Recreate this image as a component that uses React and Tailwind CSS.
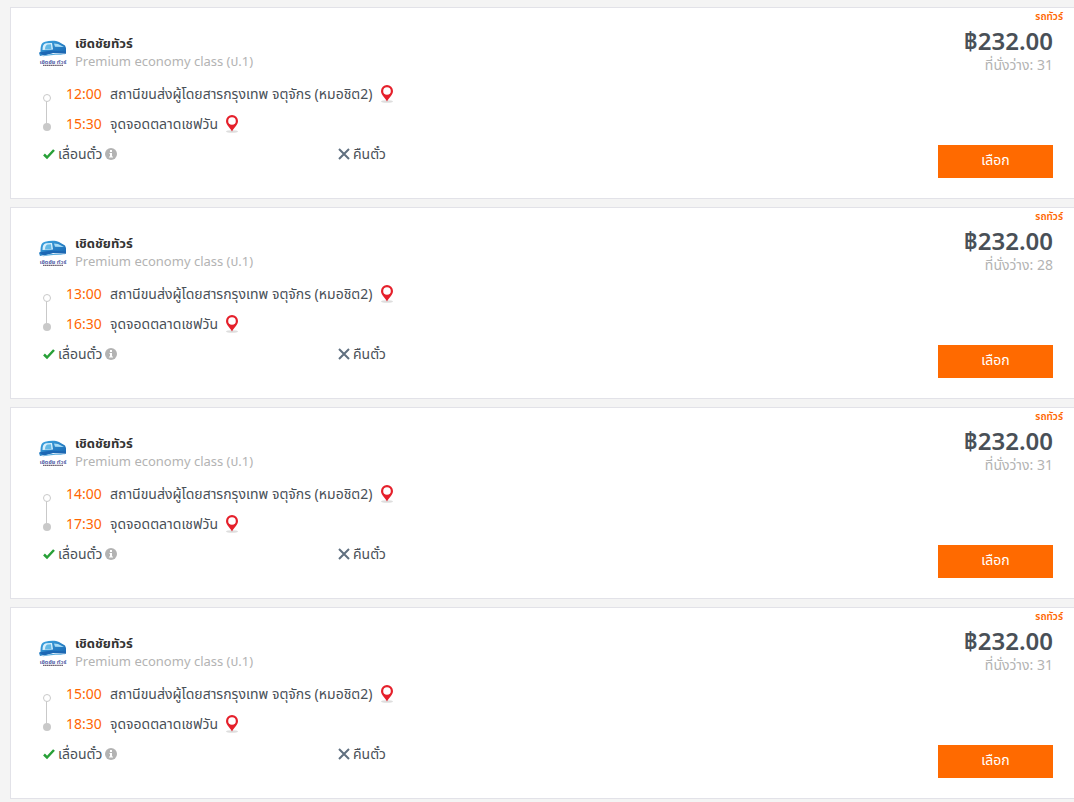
import React from "react";

const trips = [
  { depart: "12:00", arrive: "15:30", seats: 31 },
  { depart: "13:00", arrive: "16:30", seats: 28 },
  { depart: "14:00", arrive: "17:30", seats: 31 },
  { depart: "15:00", arrive: "18:30", seats: 31 },
];

function OperatorLogo() {
  return (
    <svg className="h-7 w-7 shrink-0" viewBox="0 0 28 28" role="img" aria-label="เชิดชัยทัวร์">
      <defs>
        <linearGradient id="busBody" x1="0" y1="0" x2="1" y2="1">
          <stop offset="0" stopColor="#3fa9e4" />
          <stop offset="1" stopColor="#1560ad" />
        </linearGradient>
      </defs>
      <path d="M1.500 14 C1.500 7 2.500 4.500 6 3.700 C11 2.500 17 2.500 20 4 L26 7.500 L27 10 L27 15.500 L14 15 L1 18 L0 15 Z" fill="url(#busBody)" />
      <path d="M3.500 12 C3.500 8 4.500 5.700 7 5.200 L13 5 L14 11.500 Z" fill="#d9f0fb" />
      <path d="M6 11.500 C6 8.500 7 7 8.500 6.500 L12 6.300 L12.500 11 Z" fill="#63b8e5" />
      <path d="M15 5.500 L19 6 L25 9 L16 8.800 Z" fill="#a8dcf5" />
      <path d="M0 14.500 L13 12.500 L27 13.500 L27 15.500 L14 15 L5 17.500 Z" fill="#1c67b3" />
      <path d="M3 18.500 C10 15 19 15 27 17 C19 16.500 11 17 3 18.500 Z" fill="#51a9dc" />
      <text x="14" y="25.500" textAnchor="middle" fontSize="5.800" fontWeight="600" fill="#3a4b9b">เชิดชัย ทัวร์</text>
      <path d="M4 27.300 H24" stroke="#6d6070" strokeWidth="1.200" strokeDasharray="1.500 .4" />
    </svg>
  );
}

function Pin() {
  return (
    <svg className="h-5 w-4 shrink-0" viewBox="0 0 16 20" aria-hidden="true">
      <ellipse cx="8" cy="17.500" rx="6" ry="1.300" fill="#dedede" />
      <path fillRule="evenodd" fill="#e5202b" d="M8 1 A6 6 0 0 0 2 7 C2 10.800 6 13.500 8 17.500 C10 13.500 14 10.800 14 7 A6 6 0 0 0 8 1 Z M8 3.200 A3.800 3.800 0 1 1 8 10.800 A3.800 3.800 0 1 1 8 3.200 Z" />
    </svg>
  );
}

function RouteLine() {
  return (
    <svg className="mt-3 h-11 w-2 shrink-0" viewBox="0 0 8 44" aria-hidden="true">
      <path d="M3.500 10 V34" stroke="#c9c9c9" />
      <circle cx="4" cy="7" r="3.500" fill="#fff" stroke="#c9c9c9" />
      <circle cx="4" cy="36" r="4" fill="#c9c9c9" />
    </svg>
  );
}

function Stop({ time, place }) {
  return (
    <li className="flex h-[30px] items-center gap-[6px]">
      <span className="flex">
        <time className="w-11 shrink-0 text-[#ff6600]">{time}</time>
        <span>{place}</span>
      </span>
      <a href="#map" aria-label={place}>
        <Pin />
      </a>
    </li>
  );
}

function TripCard({ depart, arrive, seats }) {
  return (
    <article className="flex justify-between border border-r-0 border-[#e2e2e8] bg-white">
      <div className="min-w-0 flex-1 pt-[26px] pb-[29px] pl-7">
        <header className="flex items-center gap-2 pb-[9px]">
          <OperatorLogo />
          <div className="leading-[18px]">
            <h2 className="text-[13px] font-bold text-[#333]">เชิดชัยทัวร์</h2>
            <p className="text-[13px] text-[#b3b3b3]">Premium economy class (ป.1)</p>
          </div>
        </header>
        <div className="flex gap-[15px] pl-1">
          <RouteLine />
          <ol>
            <Stop time={depart} place="สถานีขนส่งผู้โดยสารกรุงเทพ จตุจักร (หมอชิต2)" />
            <Stop time={arrive} place="จุดจอดตลาดเชฟวัน" />
          </ol>
        </div>
        <div className="flex h-[30px] items-center pl-1">
          <div className="flex w-[295px] items-center gap-[3px]">
            <svg className="h-3 w-3" viewBox="0 0 12 12" aria-hidden="true">
              <path d="M1 6.500 L4 9.500 L11 2" fill="none" stroke="#28a038" strokeWidth="2.500" />
            </svg>
            <span>เลื่อนตั๋ว</span>
            <svg className="h-3 w-3" viewBox="0 0 12 12" aria-hidden="true">
              <circle cx="6" cy="6" r="6" fill="#b3b3b3" />
              <path d="M5 2 H7 V4 H5 Z M4.500 5 H7 V8.500 H8 V9.500 H4 V8.500 H5 V6 H4.500 Z" fill="#fff" />
            </svg>
          </div>
          <div className="flex items-center gap-[3px]">
            <svg className="h-3 w-3" viewBox="0 0 12 12" aria-hidden="true">
              <path d="M1 1 L11 11 M11 1 L1 11" stroke="#607080" strokeWidth="2" />
            </svg>
            <span>คืนตั๋ว</span>
          </div>
        </div>
      </div>
      <div className="flex flex-col items-end pr-[21px] pb-5">
        <p className="-mr-[10px] text-[10px] leading-4 font-semibold text-[#ff6600]">รถทัวร์</p>
        <p className="text-2xl leading-[34px] font-semibold text-[#495057]">฿232.00</p>
        <p className="leading-[14px] text-[#b3b3b3]">ที่นั่งว่าง: {seats}</p>
        <button type="button" className="mt-auto h-[33px] w-[115px] bg-[#ff6a00] pb-1 text-white">
          เลือก
        </button>
      </div>
    </article>
  );
}

export default function App() {
  return (
    <main className="flex min-h-screen flex-col gap-2 bg-[#f4f4f4] pt-[7px] pl-[10px] font-['Noto_Sans','Noto_Sans_Thai',sans-serif] text-sm text-[#495057]">
      {trips.map((trip) => (
        <TripCard key={trip.depart} {...trip} />
      ))}
    </main>
  );
}
